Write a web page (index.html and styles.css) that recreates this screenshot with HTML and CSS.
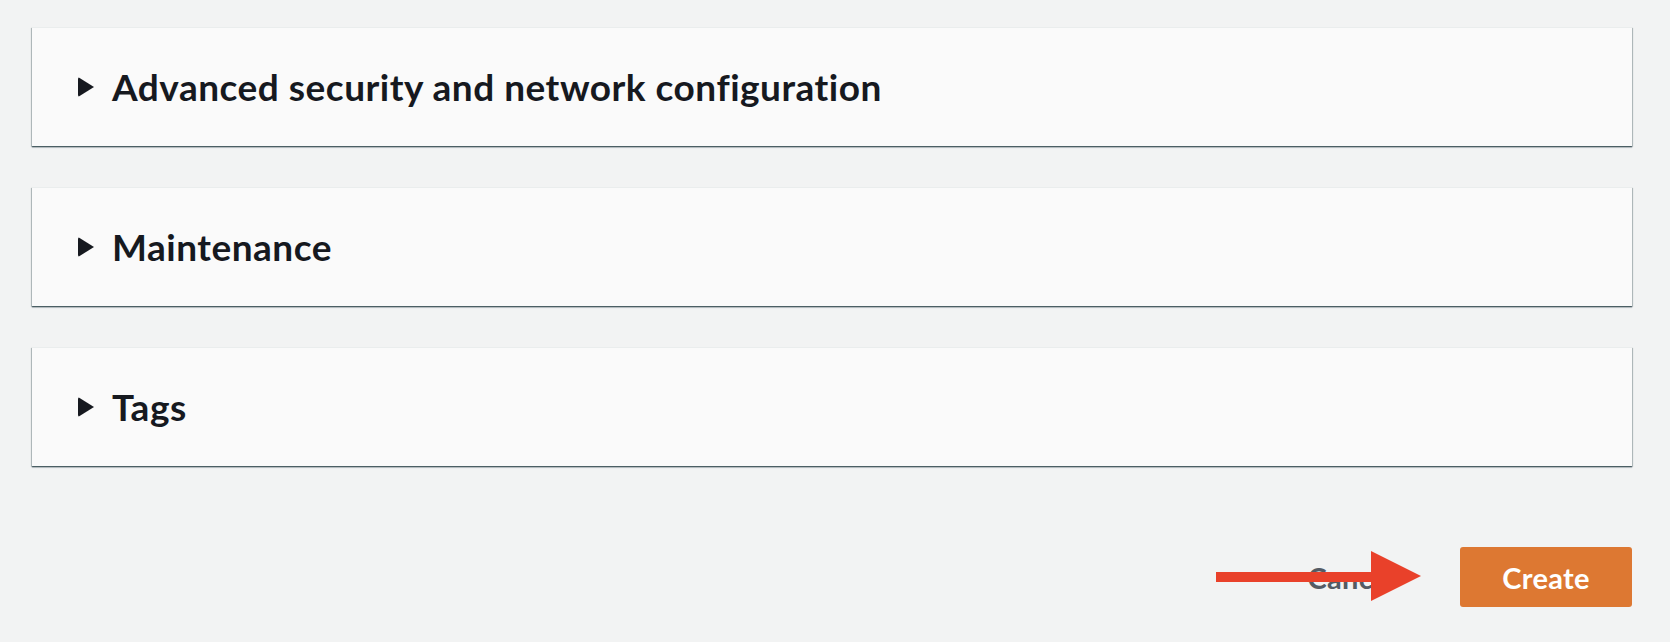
FILE: index.html
```html
<!DOCTYPE html>
<html lang="en">
<head>
<meta charset="utf-8">
<title>Create</title>
<link rel="stylesheet" href="styles.css">
</head>
<body>
<main class="page">
  <section class="card">
    <div class="card-header">
      <span class="caret"></span>
      <h2 class="card-title">Advanced security and network configuration</h2>
    </div>
  </section>
  <section class="card">
    <div class="card-header">
      <span class="caret"></span>
      <h2 class="card-title">Maintenance</h2>
    </div>
  </section>
  <section class="card">
    <div class="card-header">
      <span class="caret"></span>
      <h2 class="card-title">Tags</h2>
    </div>
  </section>
  <div class="actions">
    <button class="btn btn-link">Cancel</button>
    <button class="btn btn-primary">Create</button>
    <svg class="annotation-arrow" width="205" height="50" viewBox="0 0 205 50">
      <rect x="0" y="21" width="156" height="10" fill="#e9412a"/>
      <polygon points="155,0 205,25 155,50" fill="#e9412a"/>
    </svg>
  </div>
</main>
</body>
</html>
```

FILE: styles.css
```css
* { box-sizing: border-box; }
html, body {
  margin: 0;
  padding: 0;
  background: #f2f3f3;
  font-family: Lato, "Open Sans", sans-serif;
  color: #16191f;
}
.page {
  width: 1600px;
  margin-left: 32px;
  padding-top: 27px;
  display: flex;
  flex-direction: column;
  gap: 41px;
}
.card {
  height: 119px;
  background: #fafafa;
  border-top: 1px solid #eaeded;
  box-shadow: 0 1px 1px 0 rgba(0, 28, 36, 0.45), 0 2px 1px 0 rgba(60, 80, 100, 0.18), 1px 1px 1px 0 rgba(0, 28, 36, 0.2), -1px 1px 1px 0 rgba(0, 28, 36, 0.2);
  display: flex;
  align-items: center;
}
.card-header {
  display: flex;
  align-items: center;
  padding-left: 46px;
  gap: 18px;
}
.caret {
  width: 0;
  height: 0;
  border-top: 10.5px solid transparent;
  border-bottom: 10.5px solid transparent;
  border-left: 16px solid #16191f;
  border-radius: 2px;
}
.card-title {
  margin: 0;
  font-size: 37px;
  font-weight: 700;
  letter-spacing: 0.5px;
  line-height: 44px;
}
.actions {
  position: relative;
  margin-top: 40px;
  display: flex;
  justify-content: flex-end;
  align-items: center;
  gap: 42px;
}
.btn {
  font-family: Lato, "Open Sans", sans-serif;
  font-size: 29px;
  font-weight: 700;
  letter-spacing: 0.3px;
  border: none;
  height: 60px;
  cursor: pointer;
}
.btn-link {
  background: transparent;
  color: #545b64;
  padding: 0 22px;
}
.btn-primary {
  width: 172px;
  background: #dd7832;
  color: #ffffff;
  border-radius: 3px;
  padding: 0;
}
.annotation-arrow {
  position: absolute;
  left: 1184px;
  top: 4px;
}
```
